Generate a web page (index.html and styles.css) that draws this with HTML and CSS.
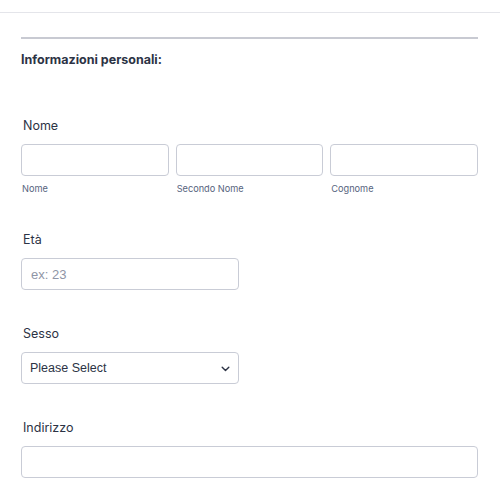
FILE: index.html
```html
<!DOCTYPE html>
<html lang="it">
<head>
<meta charset="utf-8">
<title>Informazioni personali</title>
<link rel="stylesheet" href="styles.css">
</head>
<body>
<div class="topbar"></div>
<form class="form">
  <div class="section-head">
    <h2 class="heading">Informazioni personali:</h2>
  </div>

  <div class="field field-first">
    <label class="label">Nome</label>
    <div class="name-row">
      <div class="name-col">
        <input class="input" type="text">
        <span class="sublabel">Nome</span>
      </div>
      <div class="name-col">
        <input class="input" type="text">
        <span class="sublabel">Secondo Nome</span>
      </div>
      <div class="name-col">
        <input class="input" type="text">
        <span class="sublabel">Cognome</span>
      </div>
    </div>
  </div>

  <div class="field">
    <label class="label">Età</label>
    <input class="input input-half" type="text" placeholder="ex: 23">
  </div>

  <div class="field">
    <label class="label">Sesso</label>
    <div class="select input-half">
      <span class="select-text">Please Select</span>
      <svg class="chevron" width="9" height="6" viewBox="0 0 9 6"><path d="M1.2 1.3l3.3 3.3 3.3-3.3" fill="none" stroke="#2c3345" stroke-width="1.4" stroke-linecap="round" stroke-linejoin="round"/></svg>
    </div>
  </div>

  <div class="field">
    <label class="label">Indirizzo</label>
    <input class="input" type="text">
  </div>
</form>
</body>
</html>
```

FILE: styles.css
```css
* { box-sizing: border-box; }
html, body { margin: 0; padding: 0; background: #fff; }
body {
  font-family: Inter, "Noto Sans", "Liberation Sans", sans-serif;
  color: #2c3345;
}
.topbar {
  height: 13px;
  border-bottom: 1px solid #e4e5ea;
}
.form {
  padding: 24px 22px 0 21px;
}
.section-head {
  border-top: 2px solid #c8cad2;
  padding-top: 12px;
}
.heading {
  margin: 0;
  font-size: 12.5px;
  line-height: 18px;
  font-weight: 700;
  color: #2c3345;
}
.field {
  display: flex;
  flex-direction: column;
  margin-top: 34px;
}
.field-first { margin-top: 47px; }
.label {
  font-size: 12.5px;
  line-height: 20px;
  font-weight: 400;
  margin: 0 0 8px 2px;
  color: #2c3345;
}
.name-row {
  display: grid;
  grid-template-columns: 1fr 1fr 1fr;
  gap: 7px;
}
.name-col {
  display: flex;
  flex-direction: column;
}
.input {
  display: block;
  width: 100%;
  height: 32px;
  border: 1px solid #c9ccd6;
  border-radius: 4px;
  background: #fff;
  padding: 0 8px 0 9px;
  font-family: "Liberation Sans", Arial, sans-serif;
  font-size: 13px;
  color: #2c3345;
  outline: none;
}
.input::placeholder { color: #8f95a6; }
.input-half { width: 218px; }
.sublabel {
  margin-top: 6px;
  margin-left: 1px;
  font-size: 9.2px;
  line-height: 14px;
  color: #57647e;
}
.select {
  height: 32px;
  border: 1px solid #c9ccd6;
  border-radius: 4px;
  display: flex;
  align-items: center;
  justify-content: space-between;
  padding: 0 8px 0 8px;
}
.select-text {
  font-family: "Liberation Sans", Arial, sans-serif;
  font-size: 12.5px;
  color: #2c3345;
}
.chevron { display: block; margin-top: 1px; }
```
